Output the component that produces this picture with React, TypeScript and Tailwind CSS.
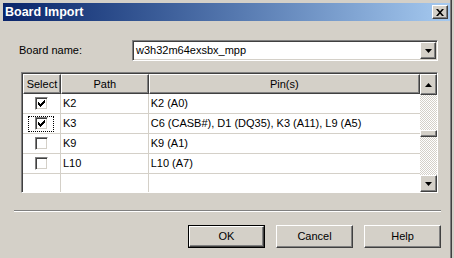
import React from "react";

const raised =
  "border border-t-white border-l-white border-r-[#404040] border-b-[#404040] shadow-[inset_-1px_-1px_0_#808080]";

const checkPixels = [
  [6, 0, 1],
  [5, 1, 2],
  [0, 2, 1],
  [4, 2, 3],
  [0, 3, 2],
  [3, 3, 3],
  [0, 4, 5],
  [1, 5, 3],
  [2, 6, 1],
];

function Check({ checked, focus }: { checked: boolean; focus?: boolean }) {
  return (
    <div
      className={
        "flex items-center justify-center w-[26px] h-[16px] " +
        (focus ? "border border-dotted border-[#000]" : "border border-transparent")
      }
    >
      <div className="w-[13px] h-[13px] bg-white border border-t-[#808080] border-l-[#808080] border-r-white border-b-white shadow-[inset_1px_1px_0_#404040,inset_-1px_-1px_0_#d4d0c8] flex items-center justify-center">
        {checked && (
          <svg width="7" height="7" viewBox="0 0 7 7" shapeRendering="crispEdges">
            {checkPixels.map(([x, y, w], i) => (
              <rect key={i} x={x} y={y} width={w} height={1} fill="#000" />
            ))}
          </svg>
        )}
      </div>
    </div>
  );
}

const rows = [
  { sel: true, path: "K2", pins: "K2 (A0)" },
  { sel: true, path: "K3", pins: "C6 (CASB#), D1 (DQ35), K3 (A11), L9 (A5)", focus: true },
  { sel: false, path: "K9", pins: "K9 (A1)" },
  { sel: false, path: "L10", pins: "L10 (A7)" },
];

export default function App() {
  return (
    <div
      className="w-[454px] h-[258px] bg-[#d4d0c8] flex overflow-hidden text-[11px] text-black"
      style={{ fontFamily: '"Liberation Sans", Arial, sans-serif' }}
    >
      <div className="w-[450px] flex flex-col">
        {/* Title bar */}
        <div className="mt-[3px] ml-[3px] mr-0 h-[18px] flex items-center bg-gradient-to-r from-[#0a246a] to-[#a6caf0]">
          <span className="ml-[2px] text-white font-bold text-[12.5px] leading-none">Board Import</span>
          <div className="flex-1" />
          <div className={"mr-[2px] w-[16px] h-[14px] bg-[#d4d0c8] flex items-center justify-center " + raised}>
            <svg width="8" height="7" viewBox="0 0 8 7">
              <path d="M0 0 L2 0 L4 2.2 L6 0 L8 0 L5 3.5 L8 7 L6 7 L4 4.8 L2 7 L0 7 L3 3.5 Z" fill="#000" />
            </svg>
          </div>
        </div>

        {/* Board name row */}
        <div className="mt-[19px] h-[21px] flex items-center">
          <span className="ml-[19px] w-[113px]">Board name:</span>
          <div className="w-[306px] h-[21px] bg-white border border-t-[#808080] border-l-[#808080] border-r-white border-b-white shadow-[inset_1px_1px_0_#404040,inset_-1px_-1px_0_#d4d0c8] flex items-center">
            <span className="ml-[3px] flex-1">w3h32m64exsbx_mpp</span>
            <div className={"mr-[1px] w-[16px] h-[17px] bg-[#d4d0c8] flex items-center justify-center " + raised}>
              <svg width="7" height="4" viewBox="0 0 7 4">
                <path d="M0 0 L7 0 L3.5 4 Z" fill="#000" />
              </svg>
            </div>
          </div>
        </div>

        {/* Table */}
        <div className="mt-[11px] ml-[21px] w-[417px] h-[121px] border border-t-[#808080] border-l-[#808080] border-r-white border-b-white flex bg-white">
          <div className="flex flex-col w-[398px] border-l border-t border-[#404040]">
            <div className="flex h-[20px] bg-[#d4d0c8]">
              <div className={"w-[38px] flex items-center justify-center " + raised}>Select</div>
              <div className={"w-[88px] flex items-center justify-center " + raised}>Path</div>
              <div className={"w-[272px] flex items-center justify-center " + raised}>Pin(s)</div>
            </div>
            {rows.map((r) => (
              <div key={r.path} className="flex h-[20px] border-b border-[#d4d0c8]">
                <div className="w-[38px] flex items-center justify-center border-r border-[#d4d0c8]">
                  <Check checked={r.sel} focus={r.focus} />
                </div>
                <div className="w-[88px] flex items-center pl-[2px] border-r border-[#d4d0c8]">{r.path}</div>
                <div className="w-[272px] flex items-center pl-[2px] whitespace-nowrap">{r.pins}</div>
              </div>
            ))}
            <div className="flex flex-1">
              <div className="w-[38px] border-r border-[#d4d0c8]" />
              <div className="w-[88px] border-r border-[#d4d0c8]" />
              <div className="w-[272px]" />
            </div>
          </div>
          {/* Scrollbar */}
          <div className="w-[17px] flex flex-col border-t border-[#404040] bg-[repeating-conic-gradient(#ffffff_0_25%,#d4d0c8_0_50%)] bg-[length:2px_2px]">
            <div className={"h-[21px] bg-[#d4d0c8] flex items-center justify-center " + raised}>
              <svg width="7" height="4" viewBox="0 0 7 4">
                <path d="M0 4 L7 4 L3.5 0 Z" fill="#000" />
              </svg>
            </div>
            <div className="h-[35px]" />
            <div className={"h-[7px] bg-[#d4d0c8] " + raised} />
            <div className="flex-1" />
            <div className={"h-[17px] bg-[#d4d0c8] flex items-center justify-center " + raised}>
              <svg width="7" height="4" viewBox="0 0 7 4">
                <path d="M0 0 L7 0 L3.5 4 Z" fill="#000" />
              </svg>
            </div>
          </div>
        </div>

        {/* Separator */}
        <div className="mt-[17px] ml-[14px] w-[427px] h-[2px] border-t border-t-[#808080] border-b border-b-white" />

        {/* Buttons */}
        <div className="mt-[13px] ml-[188px] flex gap-[11px]">
          <div className="w-[77px] h-[23px] border border-black flex">
            <div className={"flex-1 bg-[#d4d0c8] flex items-center justify-center " + raised}>OK</div>
          </div>
          <div className={"w-[77px] h-[23px] bg-[#d4d0c8] flex items-center justify-center " + raised}>Cancel</div>
          <div className={"w-[77px] h-[23px] bg-[#d4d0c8] flex items-center justify-center " + raised}>Help</div>
        </div>
      </div>
      <div className="w-[1px] bg-[#808080]" />
      <div className="w-[1px] bg-[#404040]" />
      <div className="flex-1 bg-[#d4d0c8]" />
    </div>
  );
}
